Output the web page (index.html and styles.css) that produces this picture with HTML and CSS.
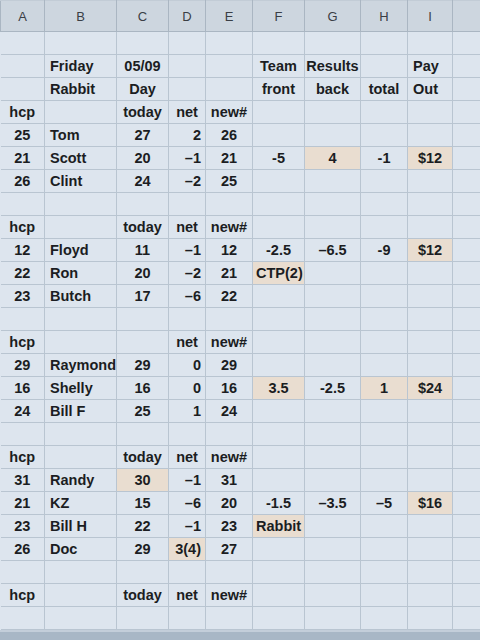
FILE: index.html
```html
<!DOCTYPE html>
<html>
<head>
<meta charset="utf-8">
<link rel="stylesheet" href="styles.css">
</head>
<body>
<div class="sheet">
<table class="grid">
<colgroup>
<col class="ca"><col class="cb"><col class="cc"><col class="cd"><col class="ce"><col class="cf"><col class="cg"><col class="ch"><col class="ci"><col class="cj">
</colgroup>
<thead>
<tr class="hdr"><th>A</th><th>B</th><th>C</th><th>D</th><th>E</th><th>F</th><th>G</th><th>H</th><th>I</th><th></th></tr>
</thead>
<tbody>
<tr><td></td><td></td><td></td><td></td><td></td><td></td><td></td><td></td><td></td><td></td></tr>
<tr><td></td><td class="l">Friday</td><td>05/09</td><td></td><td></td><td>Team</td><td>Results</td><td></td><td class="l">Pay</td><td></td></tr>
<tr><td></td><td class="l">Rabbit</td><td>Day</td><td></td><td></td><td>front</td><td>back</td><td>total</td><td class="l">Out</td><td></td></tr>

<tr><td>hcp</td><td></td><td>today</td><td>net</td><td>new#</td><td></td><td></td><td></td><td></td><td></td></tr>
<tr><td>25</td><td class="l">Tom</td><td>27</td><td class="r">2</td><td>26</td><td></td><td></td><td></td><td></td><td></td></tr>
<tr><td>21</td><td class="l">Scott</td><td>20</td><td class="r">–1</td><td>21</td><td>-5</td><td class="hl">4</td><td>-1</td><td class="hl">$12</td><td></td></tr>
<tr><td>26</td><td class="l">Clint</td><td>24</td><td class="r">–2</td><td>25</td><td></td><td></td><td></td><td></td><td></td></tr>
<tr><td></td><td></td><td></td><td></td><td></td><td></td><td></td><td></td><td></td><td></td></tr>

<tr><td>hcp</td><td></td><td>today</td><td>net</td><td>new#</td><td></td><td></td><td></td><td></td><td></td></tr>
<tr><td>12</td><td class="l">Floyd</td><td>11</td><td class="r">–1</td><td>12</td><td>-2.5</td><td>–6.5</td><td>-9</td><td class="hl">$12</td><td></td></tr>
<tr><td>22</td><td class="l">Ron</td><td>20</td><td class="r">–2</td><td>21</td><td class="hl l">CTP(2)</td><td></td><td></td><td></td><td></td></tr>
<tr><td>23</td><td class="l">Butch</td><td>17</td><td class="r">–6</td><td>22</td><td></td><td></td><td></td><td></td><td></td></tr>
<tr><td></td><td></td><td></td><td></td><td></td><td></td><td></td><td></td><td></td><td></td></tr>

<tr><td>hcp</td><td></td><td></td><td>net</td><td>new#</td><td></td><td></td><td></td><td></td><td></td></tr>
<tr><td>29</td><td class="l">Raymond</td><td>29</td><td class="r">0</td><td>29</td><td></td><td></td><td></td><td></td><td></td></tr>
<tr><td>16</td><td class="l">Shelly</td><td>16</td><td class="r">0</td><td>16</td><td class="hl">3.5</td><td>-2.5</td><td class="hl">1</td><td class="hl">$24</td><td></td></tr>
<tr><td>24</td><td class="l">Bill F</td><td>25</td><td class="r">1</td><td>24</td><td></td><td></td><td></td><td></td><td></td></tr>
<tr><td></td><td></td><td></td><td></td><td></td><td></td><td></td><td></td><td></td><td></td></tr>

<tr><td>hcp</td><td></td><td>today</td><td>net</td><td>new#</td><td></td><td></td><td></td><td></td><td></td></tr>
<tr><td>31</td><td class="l">Randy</td><td class="hl">30</td><td class="r">–1</td><td>31</td><td></td><td></td><td></td><td></td><td></td></tr>
<tr><td>21</td><td class="l">KZ</td><td>15</td><td class="r">–6</td><td>20</td><td>-1.5</td><td>–3.5</td><td>–5</td><td class="hl">$16</td><td></td></tr>
<tr><td>23</td><td class="l">Bill H</td><td>22</td><td class="r">–1</td><td>23</td><td class="hl l">Rabbit</td><td></td><td></td><td></td><td></td></tr>
<tr><td>26</td><td class="l">Doc</td><td>29</td><td class="hl r">3(4)</td><td>27</td><td></td><td></td><td></td><td></td><td></td></tr>
<tr><td></td><td></td><td></td><td></td><td></td><td></td><td></td><td></td><td></td><td></td></tr>

<tr><td>hcp</td><td></td><td>today</td><td>net</td><td>new#</td><td></td><td></td><td></td><td></td><td></td></tr>
<tr><td></td><td></td><td></td><td></td><td></td><td></td><td></td><td></td><td></td><td></td></tr>
</tbody>
</table>
<div class="bar"></div>
</div>
</body>
</html>
```
FILE: styles.css
```css
html, body {
  margin: 0;
  padding: 0;
  background: #dde5ee;
}
.sheet {
  width: 480px;
  height: 640px;
  overflow: hidden;
  display: flex;
  flex-direction: column;
}
.grid {
  border-collapse: collapse;
  table-layout: fixed;
  width: 480px;
  font-family: "Liberation Sans", Arial, sans-serif;
  font-weight: bold;
  font-size: 14.5px;
  color: #1b1d22;
}
.ca { width: 44px; }
.cb { width: 72px; }
.cc { width: 52px; }
.cd { width: 37px; }
.ce { width: 47px; }
.cf { width: 52px; }
.cg { width: 56px; }
.ch { width: 47px; }
.ci { width: 45px; }
.cj { width: 28px; }

.hdr th {
  height: 30px;
  padding: 0;
  background: #cdd6df;
  font-weight: normal;
  font-size: 13px;
  color: #3a3e45;
  border: 1px solid #aab6c2;
  border-top-color: #c2ccd6;
}
.grid td {
  height: 22px;
  padding: 0 1px;
  border: 1px solid #b9c5d1;
  text-align: center;
  white-space: nowrap;
  overflow: visible;
}
.grid td:first-child {
  border-left: none;
}
.grid td.l {
  text-align: left;
  padding-left: 5px;
}
.grid td.hl.l {
  padding-left: 3px;
}
.grid td.r {
  text-align: right;
  padding-right: 4px;
}
.grid td.hl {
  background: #e9ddd0;
}
.bar {
  flex: 1;
  background: #a8b7c6;
  border-top: 2px solid #c3ceda;
}
```
